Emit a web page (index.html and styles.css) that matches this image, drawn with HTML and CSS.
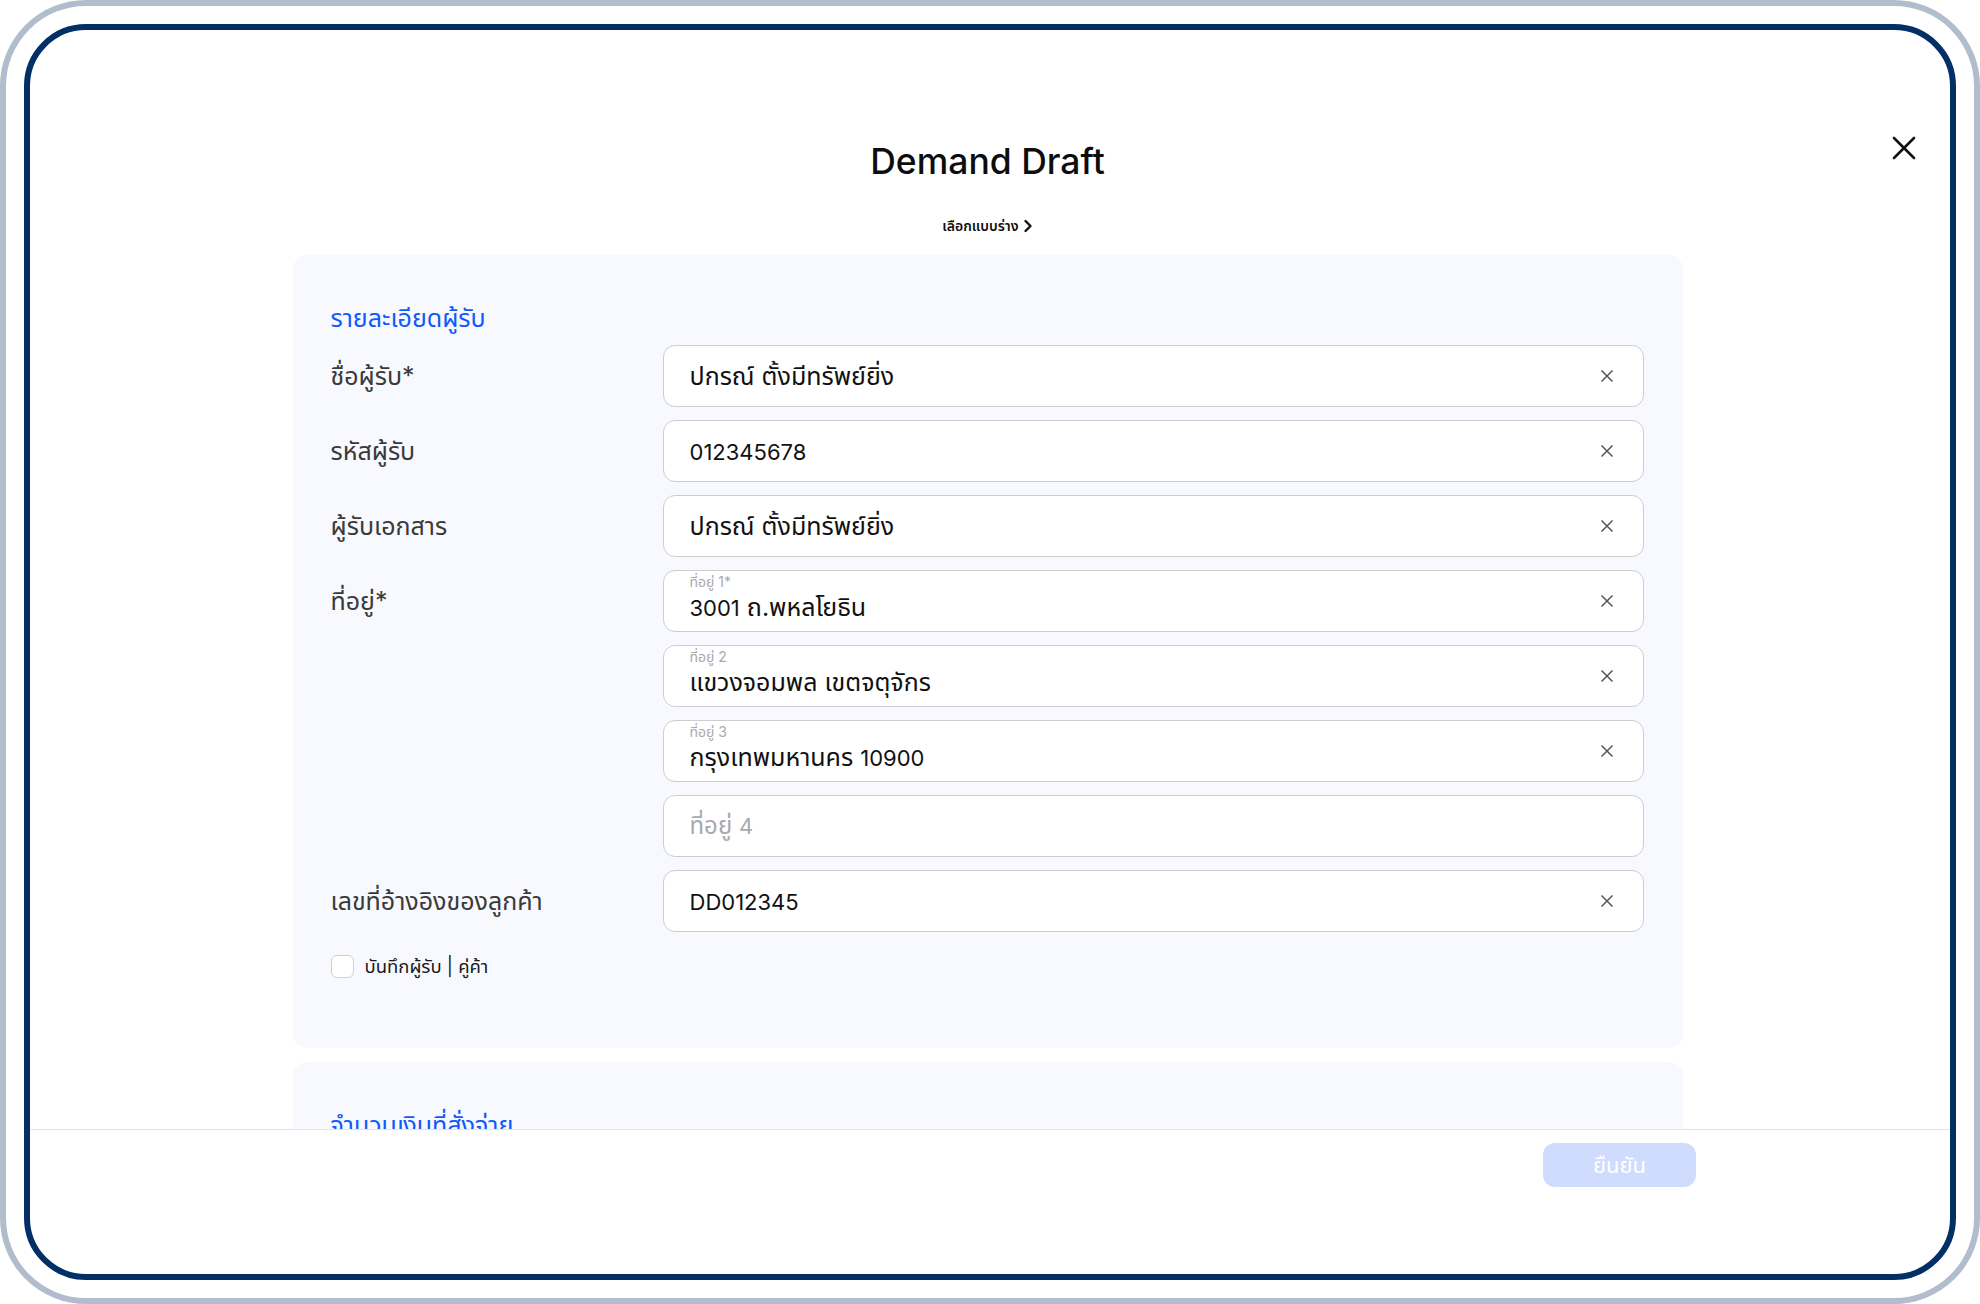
FILE: index.html
```html
<!DOCTYPE html>
<html lang="th">
<head>
<meta charset="utf-8">
<title>Demand Draft</title>
<link rel="stylesheet" href="styles.css">
</head>
<body>
<div class="device">
  <div class="screen">
    <button class="close" aria-label="close">
      <svg width="24" height="24" viewBox="0 0 24 24"><path d="M2 2L22 22M22 2L2 22" stroke="#111" stroke-width="2.6" stroke-linecap="round"/></svg>
    </button>
    <div class="content">
      <h1 class="title">Demand Draft</h1>
      <div class="subtitle">เลือกแบบร่าง <svg width="10" height="14" viewBox="0 0 10 14"><path d="M2.5 2L7.5 7L2.5 12" fill="none" stroke="#111" stroke-width="2.4" stroke-linecap="round" stroke-linejoin="round"/></svg></div>

      <section class="card">
        <h2 class="card-title">รายละเอียดผู้รับ</h2>
        <div class="form">
          <div class="label">ชื่อผู้รับ*</div>
          <div class="fields">
            <div class="field"><span class="value">ปกรณ์ ตั้งมีทรัพย์ยิ่ง</span><span class="clear"><svg width="14" height="14" viewBox="0 0 14 14"><path d="M1.5 1.5L12.5 12.5M12.5 1.5L1.5 12.5" stroke="#555" stroke-width="1.5"/></svg></span></div>
          </div>

          <div class="label">รหัสผู้รับ</div>
          <div class="fields">
            <div class="field"><span class="value"><span class="num">012345678</span></span><span class="clear"><svg width="14" height="14" viewBox="0 0 14 14"><path d="M1.5 1.5L12.5 12.5M12.5 1.5L1.5 12.5" stroke="#555" stroke-width="1.5"/></svg></span></div>
          </div>

          <div class="label">ผู้รับเอกสาร</div>
          <div class="fields">
            <div class="field"><span class="value">ปกรณ์ ตั้งมีทรัพย์ยิ่ง</span><span class="clear"><svg width="14" height="14" viewBox="0 0 14 14"><path d="M1.5 1.5L12.5 12.5M12.5 1.5L1.5 12.5" stroke="#555" stroke-width="1.5"/></svg></span></div>
          </div>

          <div class="label">ที่อยู่*</div>
          <div class="fields">
            <div class="field floating"><span class="stack"><span class="mini">ที่อยู่ 1*</span><span class="value"><span class="num">3001</span> ถ.พหลโยธิน</span></span><span class="clear"><svg width="14" height="14" viewBox="0 0 14 14"><path d="M1.5 1.5L12.5 12.5M12.5 1.5L1.5 12.5" stroke="#555" stroke-width="1.5"/></svg></span></div>
            <div class="field floating"><span class="stack"><span class="mini">ที่อยู่ 2</span><span class="value">แขวงจอมพล เขตจตุจักร</span></span><span class="clear"><svg width="14" height="14" viewBox="0 0 14 14"><path d="M1.5 1.5L12.5 12.5M12.5 1.5L1.5 12.5" stroke="#555" stroke-width="1.5"/></svg></span></div>
            <div class="field floating"><span class="stack"><span class="mini">ที่อยู่ 3</span><span class="value">กรุงเทพมหานคร <span class="num">10900</span></span></span><span class="clear"><svg width="14" height="14" viewBox="0 0 14 14"><path d="M1.5 1.5L12.5 12.5M12.5 1.5L1.5 12.5" stroke="#555" stroke-width="1.5"/></svg></span></div>
            <div class="field"><span class="placeholder">ที่อยู่ <span class="num">4</span></span></div>
          </div>

          <div class="label">เลขที่อ้างอิงของลูกค้า</div>
          <div class="fields">
            <div class="field"><span class="value"><span class="num">DD012345</span></span><span class="clear"><svg width="14" height="14" viewBox="0 0 14 14"><path d="M1.5 1.5L12.5 12.5M12.5 1.5L1.5 12.5" stroke="#555" stroke-width="1.5"/></svg></span></div>
          </div>
        </div>
        <label class="check"><span class="box"></span><span>บันทึกผู้รับ | คู่ค้า</span></label>
      </section>

      <section class="card card-next">
        <h2 class="card-title">จำนวนเงินที่สั่งจ่าย</h2>
      </section>
    </div>
    <div class="footer">
      <button class="confirm">ยืนยัน</button>
    </div>
  </div>
</div>
</body>
</html>
```
FILE: styles.css
```css
* { box-sizing: border-box; }
html, body { margin: 0; padding: 0; background: #fff; }
body {
  font-family: "Inter", "Noto Sans Thai", "Noto Sans Thai UI", "Noto Sans", "Loma", "Garuda", sans-serif;
  color: #111;
}
.device {
  width: 1980px;
  height: 1304px;
  border: 6px solid #b1bccc;
  border-radius: 86px;
  padding: 18px;
  background: #fff;
}
.screen {
  position: relative;
  height: 100%;
  border: 6px solid #022f66;
  border-radius: 62px;
  overflow: hidden;
  background: #fff;
  display: flex;
  flex-direction: column;
}
.close {
  position: absolute;
  top: 106px;
  right: 34px;
  width: 24px;
  height: 24px;
  padding: 0;
  border: 0;
  background: none;
}
.close svg { display: block; }
.content {
  height: 1099px;
  flex: none;
  overflow: hidden;
  padding-top: 110px;
  padding-right: 5px;
  display: flex;
  flex-direction: column;
  align-items: center;
}
.title {
  margin: 0;
  font-size: 35.5px;
  line-height: 44px;
  font-weight: 500;
  color: #0d0d0d;
}
.subtitle {
  margin-top: 32px;
  height: 20px;
  font-size: 14px;
  line-height: 20px;
  font-weight: 600;
  display: flex;
  align-items: center;
  gap: 4px;
}
.card {
  margin-top: 19px;
  width: 1390px;
  flex: none;
  background: #f8f9fe;
  border-radius: 14px;
  padding: 48px 39px 70px 38px;
}
.card-next {
  margin-top: 14px;
  height: 300px;
}
.card-title {
  margin: 0;
  font-size: 25px;
  line-height: 30px;
  font-weight: 400;
  color: #1059fa;
}
.form {
  margin-top: 12px;
  display: grid;
  grid-template-columns: 332px 1fr;
  row-gap: 13px;
}
.label {
  height: 62px;
  line-height: 62px;
  font-size: 25px;
  color: #3a3a3a;
}
.fields {
  display: flex;
  flex-direction: column;
  gap: 13px;
}
.field {
  height: 62px;
  background: #fff;
  border: 1.5px solid #cdcdd2;
  border-radius: 12px;
  padding: 0 29px 0 26px;
  display: flex;
  align-items: center;
  justify-content: space-between;
}
.value {
  font-size: 25px;
  line-height: 30px;
  color: #111;
}
.num { font-size: 22px; }
.placeholder {
  font-size: 24px;
  line-height: 30px;
  color: #a9a9ae;
}
.clear { display: flex; width: 14px; height: 14px; }
.field.floating { align-items: flex-start; }
.stack {
  display: flex;
  flex-direction: column;
  padding-top: 3px;
}
.mini {
  font-size: 14px;
  line-height: 16px;
  color: #a9a9ae;
}
.stack .value { margin-top: 2px; }
.field.floating .clear { margin-top: 23px; }
.check {
  margin-top: 22px;
  display: flex;
  align-items: center;
  gap: 11px;
  font-size: 18.5px;
  line-height: 24px;
  color: #1a1a1a;
}
.box {
  width: 23px;
  height: 23px;
  border: 1.5px solid #cfcfd4;
  border-radius: 6px;
  background: #fff;
}
.footer {
  height: 71px;
  flex: none;
  border-top: 1px solid #e4e4e7;
  display: flex;
  justify-content: flex-end;
  align-items: flex-start;
  padding: 13px 254px 0 0;
  background: #fff;
}
.confirm {
  width: 153px;
  height: 44px;
  border: 0;
  border-radius: 12px;
  background: #d0dcfd;
  color: #fff;
  font-family: inherit;
  font-size: 22px;
  line-height: 30px;
}
```
